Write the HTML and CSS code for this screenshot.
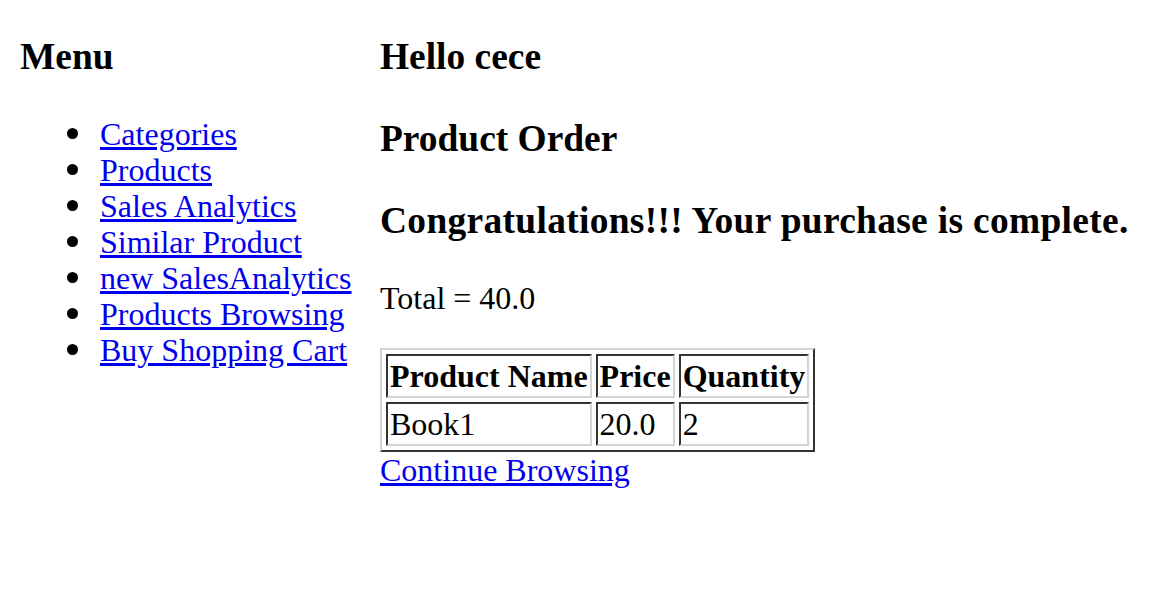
FILE: index.html
```html
<!DOCTYPE html>
<html>
<head>
<meta charset="utf-8">
<title>Product Order</title>
<link rel="stylesheet" href="styles.css">
</head>
<body>
<div class="page">
  <div class="menu">
    <h3>Menu</h3>
    <ul>
      <li><a href="#">Categories</a></li>
      <li><a href="#">Products</a></li>
      <li><a href="#">Sales Analytics</a></li>
      <li><a href="#">Similar Product</a></li>
      <li><a href="#">new SalesAnalytics</a></li>
      <li><a href="#">Products Browsing</a></li>
      <li><a href="#">Buy Shopping Cart</a></li>
    </ul>
  </div>
  <div class="content">
    <h3>Hello cece</h3>
    <h3>Product Order</h3>
    <h3 class="wide">Congratulations!!! Your purchase is complete.</h3>
    <p>Total = 40.0</p>
    <table class="order">
      <tr><th>Product Name</th><th>Price</th><th>Quantity</th></tr>
      <tr><td>Book1</td><td>20.0</td><td>2</td></tr>
    </table>
    <a href="#">Continue Browsing</a>
  </div>
</div>
</body>
</html>
```
FILE: styles.css
```css
html, body {
  margin: 0;
  padding: 0;
  background: #fff;
}
body {
  font-family: "Liberation Serif", "Times New Roman", serif;
  font-size: 32px;
  line-height: 36px;
  color: #000;
}
.page {
  display: grid;
  grid-template-columns: 360px 1fr;
  padding: 0 20px;
  align-items: start;
}
h3 {
  font-size: 37.44px;
  line-height: 45px;
  font-weight: bold;
  margin: 37px 0;
}
h3.wide {
  letter-spacing: 0.32px;
}
.menu h3:first-child,
.content h3:first-child {
  margin-top: 34px;
}
ul {
  margin: 32px 0;
  padding-left: 80px;
  list-style: none;
}
li {
  line-height: 36px;
}
li::before {
  content: "";
  display: inline-block;
  width: 11px;
  height: 11px;
  border-radius: 50%;
  background: #000;
  margin-left: -33px;
  margin-right: 22px;
  vertical-align: 6px;
}
a {
  color: #0000ee;
  text-decoration: underline;
}
p {
  margin: 32px 0;
}
.order {
  border-collapse: separate;
  border-spacing: 4px;
  border: 2px solid;
  border-color: #d4d4d4 #333 #333 #d4d4d4;
  margin-top: 32px;
}
.order th,
.order td {
  border: 2px solid;
  border-color: #333 #d4d4d4 #d4d4d4 #333;
  padding: 2px;
  line-height: 36px;
}
.order th {
  font-weight: bold;
  text-align: center;
}
.order td {
  text-align: left;
}
```
